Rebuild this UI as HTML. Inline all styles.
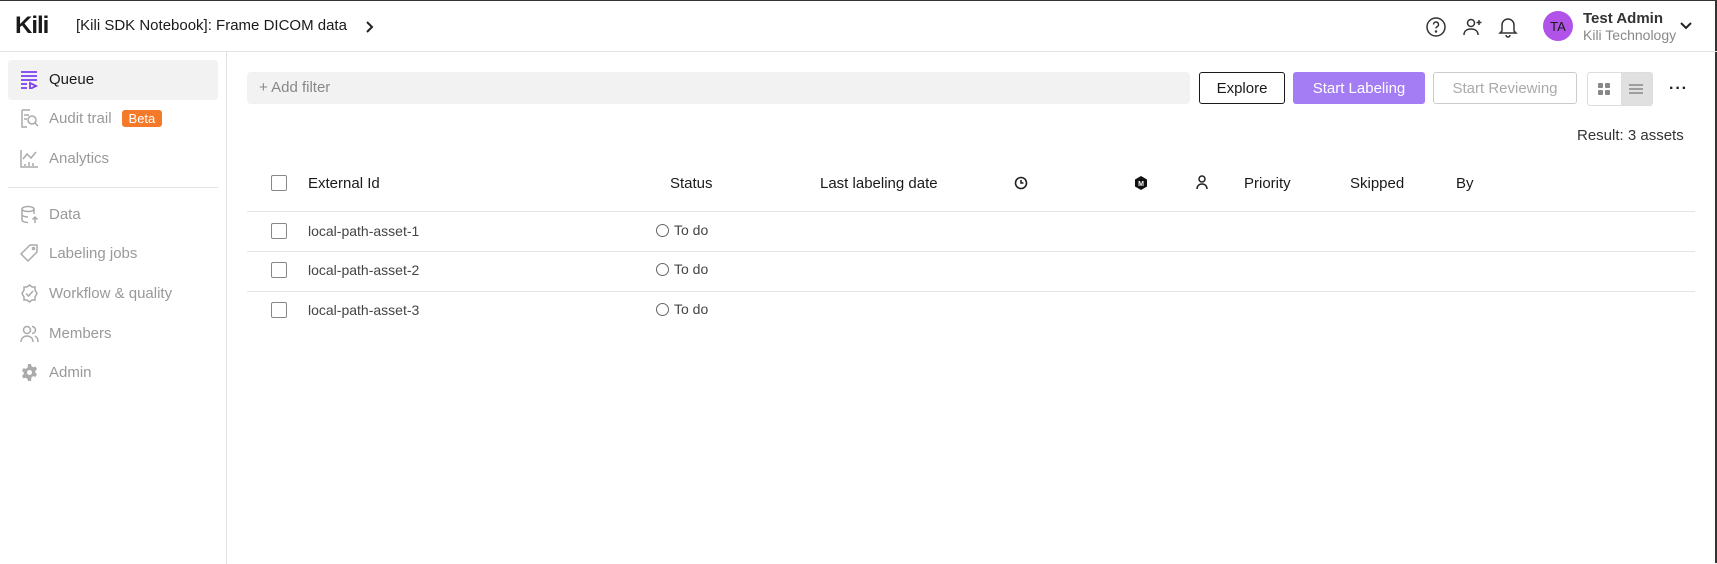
<!DOCTYPE html>
<html><head><style>
*{box-sizing:border-box;margin:0;padding:0}
body{width:1717px;height:563px;overflow:hidden;background:#fff;font-family:"Liberation Sans",sans-serif;color:#1a1a1a;position:relative;border-top:1px solid #333;border-right:2px solid #333}
.a{position:absolute;white-space:nowrap}
.hdr{position:absolute;left:0;top:0;width:1717px;height:51px;border-bottom:1px solid #e2e2e2}
.side{position:absolute;left:0;top:51px;width:227px;height:512px;border-right:1px solid #e2e2e2}
.item{position:absolute;left:20px;font-size:15px;color:#999;display:flex;align-items:center;gap:10px}
.item svg{width:19px;height:19px}
.btn{position:absolute;top:71px;height:32px;border-radius:3px;font-size:15px;display:flex;align-items:center;justify-content:center}
.th{position:absolute;top:174px;font-size:15px;color:#1a1a1a}
.cb{position:absolute;left:271px;width:16px;height:16px;border:1px solid #888;border-radius:2px}
.row{position:absolute;left:247px;width:1448px;height:1px;background:#e4e4e4}
.td{position:absolute;left:308px;font-size:14px;color:#444}
.st{position:absolute;left:656px;font-size:14px;color:#444;display:flex;align-items:center;gap:5px}
.st i{width:13px;height:13px;border:1px solid #666;border-radius:50%;display:inline-block}
</style></head><body>
<div class="hdr"></div>
<div class="a" style="left:15px;top:11px;font-size:24px;font-weight:bold;letter-spacing:-1px;color:#1a1a1a">Kili</div>
<div class="a" style="left:76px;top:16px;font-size:15px">[Kili SDK Notebook]: Frame DICOM data</div>
<svg class="a" style="left:364px;top:20px" width="10" height="12" viewBox="0 0 10 12" fill="none" stroke="#222" stroke-width="2"><path d="M3 1l5 5-5 5"/></svg>
<svg class="a" style="left:1425px;top:15px" width="22" height="22" viewBox="0 0 22 22" fill="none" stroke="#333" stroke-width="1.5"><circle cx="11" cy="11" r="9"/><path d="M8.5 8.5a2.5 2.5 0 1 1 3.5 2.3c-.7.3-1 .8-1 1.6"/><circle cx="11" cy="15.5" r=".5" fill="#333"/></svg>
<svg class="a" style="left:1462px;top:15px" width="22" height="22" viewBox="0 0 22 22" fill="none" stroke="#333" stroke-width="1.5"><circle cx="9" cy="7" r="3.5"/><path d="M2 19c0-4 3-6 7-6s7 2 7 6M17 4v5M14.5 6.5h5"/></svg>
<svg class="a" style="left:1497px;top:14px" width="22" height="24" viewBox="0 0 22 24" fill="none" stroke="#333" stroke-width="1.5"><path d="M5 16V10a6 6 0 0 1 12 0v6l2 2H3z"/><path d="M9 20a2 2 0 0 0 4 0"/></svg>
<div class="a" style="left:1543px;top:10px;width:30px;height:30px;border-radius:50%;background:#b152e8;font-size:13px;display:flex;align-items:center;justify-content:center;color:#1a1a1a">TA</div>
<div class="a" style="left:1583px;top:9px;font-size:15px;font-weight:bold;color:#333">Test Admin</div>
<div class="a" style="left:1583px;top:26px;font-size:14px;color:#888">Kili Technology</div>
<svg class="a" style="left:1680px;top:20px" width="12" height="10" viewBox="0 0 12 10" fill="none" stroke="#222" stroke-width="2"><path d="M1 2l5 5 5-5"/></svg>

<div class="side"></div>
<div class="a" style="left:8px;top:59px;width:210px;height:40px;background:#f2f2f2;border-radius:4px"></div>
<div class="item" style="top:69px;color:#1a1a1a"><svg viewBox="0 0 19 19" fill="none" stroke="#7a3ff0" stroke-width="1.8"><path d="M1 2h16M1 6h16M1 10h16M1 14h6M1 18h6M10 13v6l6-3z"/></svg>Queue</div>
<div class="item" style="top:108px"><svg viewBox="0 0 19 19" fill="none" stroke="#aaa" stroke-width="1.5"><path d="M2 1h8M2 1v17h5M4 6h5M4 10h3"/><circle cx="12" cy="11" r="4"/><path d="M15 14l3 3"/></svg>Audit trail <span style="background:#f47a2a;color:#fff;font-size:13px;padding:1px 7px;border-radius:3px;margin-left:0">Beta</span></div>
<div class="item" style="top:148px"><svg viewBox="0 0 19 19" fill="none" stroke="#aaa" stroke-width="1.5"><path d="M1 1v17h17M3 10l4-5 4 4 5-6M5 15v2M9 13v4M13 14v3"/></svg>Analytics</div>
<div class="a" style="left:8px;top:186px;width:210px;height:1px;background:#e2e2e2"></div>
<div class="item" style="top:204px"><svg viewBox="0 0 19 19" fill="none" stroke="#aaa" stroke-width="1.5"><ellipse cx="8" cy="4" rx="6" ry="2.5"/><path d="M2 4v11c0 1.5 3 2.5 6 2.5M14 4v5M2 9.5c0 1.5 3 2.5 6 2.5M15 12v6M12.5 14.5L15 12l2.5 2.5"/></svg>Data</div>
<div class="item" style="top:243px"><svg viewBox="0 0 19 19" fill="none" stroke="#aaa" stroke-width="1.5"><path d="M10 1h7v7l-9 9-7-7z"/><circle cx="13.5" cy="4.5" r="1"/></svg>Labeling jobs</div>
<div class="item" style="top:283px"><svg viewBox="0 0 19 19" fill="none" stroke="#aaa" stroke-width="1.5"><path d="M9.5 1l2.5 2h3v3l2 3.5-2 3.5v3h-3l-2.5 2-2.5-2H4v-3L2 9.5 4 6V3h3z"/><path d="M6 9.5l2.5 2.5 4.5-5"/></svg>Workflow &amp; quality</div>
<div class="item" style="top:323px"><svg viewBox="0 0 19 19" fill="none" stroke="#aaa" stroke-width="1.5"><circle cx="7" cy="6" r="3.5"/><path d="M1 18c0-4 3-6 6-6s6 2 6 6M12 2.5a3.5 3.5 0 0 1 0 7M15 12c2 1 3 3 3 6"/></svg>Members</div>
<div class="item" style="top:362px"><svg viewBox="0 0 19 19" fill="#aaa"><path d="M8 1h3l.5 2.3 1.8 1 2.2-.8 1.5 2.6-1.7 1.6v2l1.7 1.6-1.5 2.6-2.2-.8-1.8 1L11 18H8l-.5-2.3-1.8-1-2.2.8L2 12.9l1.7-1.6v-2L2 7.7l1.5-2.6 2.2.8 1.8-1z"/><circle cx="9.5" cy="9.5" r="2.5" fill="#fff"/></svg>Admin</div>

<div class="a" style="left:247px;top:71px;width:943px;height:32px;background:#f2f2f2;border-radius:4px"></div>
<div class="a" style="left:259px;top:78px;font-size:15px;color:#888">+ Add filter</div>
<div class="btn" style="left:1199px;width:86px;border:1px solid #1a1a1a;color:#1a1a1a">Explore</div>
<div class="btn" style="left:1293px;width:132px;background:#a47cf3;color:#fff">Start Labeling</div>
<div class="btn" style="left:1433px;width:144px;border:1px solid #ccc;color:#aaa">Start Reviewing</div>
<div class="a" style="left:1587px;top:71px;width:66px;height:34px;border:1px solid #ddd;border-radius:3px;display:flex"><div style="width:33px;display:flex;align-items:center;justify-content:center"><svg width="12" height="12" viewBox="0 0 12 12" fill="#888"><rect width="5" height="5" rx="1"/><rect x="7" width="5" height="5" rx="1"/><rect y="7" width="5" height="5" rx="1"/><rect x="7" y="7" width="5" height="5" rx="1"/></svg></div><div style="width:32px;background:#e0e0e0;display:flex;align-items:center;justify-content:center"><svg width="14" height="10" viewBox="0 0 14 10" stroke="#888" stroke-width="1.5"><path d="M0 1h14M0 5h14M0 9h14"/></svg></div></div>
<div class="a" style="left:1669px;top:79px;font-size:16px;font-weight:bold;letter-spacing:1px">···</div>
<div class="a" style="left:1577px;top:126px;font-size:15px;color:#333">Result: 3 assets</div>

<div class="cb" style="top:174px"></div>
<div class="th" style="left:308px">External Id</div>
<div class="th" style="left:670px">Status</div>
<div class="th" style="left:820px">Last labeling date</div>
<svg class="a" style="left:1014px;top:175px" width="14" height="14" viewBox="0 0 14 14" fill="none" stroke="#222" stroke-width="1.6"><circle cx="7" cy="7" r="5.5"/><path d="M7 4v3h2.5"/></svg>
<svg class="a" style="left:1134px;top:175px" width="14" height="14" viewBox="0 0 14 14"><path d="M7 0l6 3.5v7L7 14 1 10.5v-7z" fill="#111"/><text x="7" y="10" font-size="7" fill="#fff" text-anchor="middle" font-family="Liberation Sans" font-weight="bold">M</text></svg>
<svg class="a" style="left:1196px;top:174px" width="12" height="15" viewBox="0 0 12 15" fill="none" stroke="#222" stroke-width="1.5"><circle cx="6" cy="4" r="3"/><path d="M1 14c0-3 2-5 5-5s5 2 5 5"/></svg>
<div class="th" style="left:1244px">Priority</div>
<div class="th" style="left:1350px">Skipped</div>
<div class="th" style="left:1456px">By</div>
<div class="row" style="top:210px"></div>
<div class="cb" style="top:222px"></div><div class="td" style="top:222px">local-path-asset-1</div><div class="st" style="top:221px"><i></i>To do</div>
<div class="row" style="top:250px"></div>
<div class="cb" style="top:261px"></div><div class="td" style="top:261px">local-path-asset-2</div><div class="st" style="top:260px"><i></i>To do</div>
<div class="row" style="top:290px"></div>
<div class="cb" style="top:301px"></div><div class="td" style="top:301px">local-path-asset-3</div><div class="st" style="top:300px"><i></i>To do</div>
</body></html>
